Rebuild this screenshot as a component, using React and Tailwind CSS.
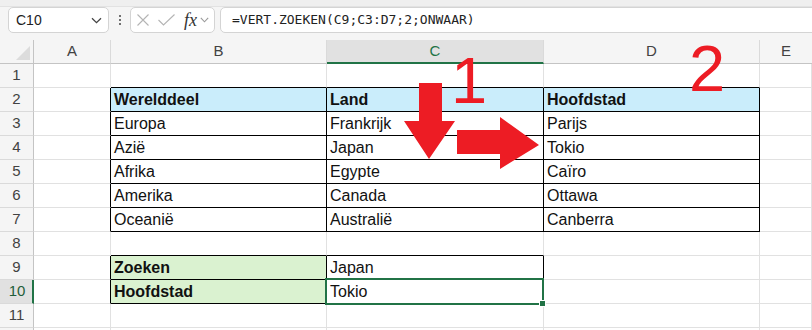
import React from "react";

const SANS = { fontFamily: '"Liberation Sans", Arial, sans-serif' };

const data = {
  2: ["Werelddeel", "Land", "Hoofdstad"],
  3: ["Europa", "Frankrijk", "Parijs"],
  4: ["Azië", "Japan", "Tokio"],
  5: ["Afrika", "Egypte", "Caïro"],
  6: ["Amerika", "Canada", "Ottawa"],
  7: ["Oceanië", "Australië", "Canberra"],
  9: ["Zoeken", "Japan", ""],
  10: ["Hoofdstad", "Tokio", ""],
};

function rightBlack(r, c) {
  if (r >= 2 && r <= 7 && c >= 0 && c <= 3) return true;
  if (r >= 9 && r <= 10 && c >= 0 && c <= 2) return true;
  return false;
}
function bottomBlack(r, c) {
  if (r >= 1 && r <= 7 && c >= 1 && c <= 3) return true;
  if (r >= 8 && r <= 10 && c >= 1 && c <= 2) return true;
  return false;
}

function Cell({ r, c }) {
  const text = data[r] && c >= 1 && c <= 3 ? data[r][c - 1] : "";
  const blue = r === 2 && c >= 1 && c <= 3;
  const green = (r === 9 || r === 10) && c === 1;
  const bold = blue || green;
  return (
    <div
      className={
        "h-[24px] border-r border-b pl-[3px] text-[16px] leading-[24px] whitespace-nowrap text-[#111] " +
        (rightBlack(r, c) ? "border-r-black " : "border-r-[#e1e1e1] ") +
        (bottomBlack(r, c) ? "border-b-black " : "border-b-[#e1e1e1] ") +
        (blue ? "bg-[#caedfb] " : green ? "bg-[#daf2d0] " : "bg-white ") +
        (bold ? "font-bold" : "font-normal")
      }
      style={SANS}
    >
      {text}
    </div>
  );
}

function RowHeader({ r }) {
  const sel = r === 10;
  return (
    <div
      className={
        "h-[24px] border-b border-b-[#dadada] flex items-center justify-center text-[15px] " +
        (sel
          ? "bg-[#e1e1e1] border-r-2 border-r-[#217346] text-[#1e5e3a]"
          : "bg-[#f5f5f5] border-r border-r-[#c4c4c4] text-[#424242]")
      }
      style={SANS}
    >
      <span className={sel ? "pl-[2px]" : ""}>{r < 12 ? r : ""}</span>
    </div>
  );
}

function ColHeader({ label, idx }) {
  const sel = label === "C";
  return (
    <div
      className={
        "h-[24px] flex items-center justify-center text-[15px] " +
        (idx === 4 ? "" : "border-r border-r-[#dadada] ") +
        (sel
          ? "bg-[#e1e1e1] border-b-2 border-b-[#217346] text-[#217346]"
          : "bg-[#f5f5f5] border-b border-b-[#c4c4c4] text-[#424242]")
      }
      style={SANS}
    >
      {label}
    </div>
  );
}

export default function App() {
  const rows = [1, 2, 3, 4, 5, 6, 7, 8, 9, 10, 11, 12];
  return (
    <div className="relative w-[812px] h-[330px] overflow-hidden bg-white">
      {/* top strip */}
      <div className="h-[7px] bg-[#efefef] border-b border-b-[#e2e2e2]" />
      {/* formula bar */}
      <div className="h-[33px] bg-[#f5f5f5] flex items-start">
        <div className="ml-[8px] w-[101px] h-[26px] bg-white border border-[#d4d4d4] rounded-[5px] flex items-center justify-between pl-[7px] pr-[6px]">
          <span className="text-[14px] text-[#222]" style={SANS}>C10</span>
          <svg width="11" height="7" viewBox="0 0 11 7">
            <path d="M1 1.2 L5.5 5.6 L10 1.2" fill="none" stroke="#444" strokeWidth="1.3" />
          </svg>
        </div>
        <div className="w-[21px] h-[26px] flex flex-col items-center justify-center gap-[2px]">
          <span className="w-[2px] h-[2px] bg-[#444] rounded-full" />
          <span className="w-[2px] h-[2px] bg-[#444] rounded-full" />
          <span className="w-[2px] h-[2px] bg-[#444] rounded-full" />
        </div>
        <div className="w-[85px] h-[26px] bg-white border border-[#d4d4d4] rounded-[5px] flex items-center pl-[6px] gap-[9px]">
          <svg width="12" height="12" viewBox="0 0 12 12">
            <path d="M0.5 0.5 L11.5 11.5 M11.5 0.5 L0.5 11.5" fill="none" stroke="#b4b4b4" strokeWidth="1.1" />
          </svg>
          <svg width="17" height="12" viewBox="0 0 17 12">
            <path d="M0.5 6 L5.5 11 L16.5 0.5" fill="none" stroke="#b4b4b4" strokeWidth="1.1" />
          </svg>
          <div className="flex items-center gap-[3px]">
            <span
              className="italic text-[18px] leading-none text-[#333] font-normal"
              style={{ fontFamily: '"Liberation Serif", "Times New Roman", serif' }}
            >
              fx
            </span>
            <svg width="9" height="6" viewBox="0 0 9 6">
              <path d="M0.8 0.8 L4.5 4.8 L8.2 0.8" fill="none" stroke="#9a9a9a" strokeWidth="1.1" />
            </svg>
          </div>
        </div>
        <div className="ml-[5px] -mr-[6px] flex-1 h-[26px] bg-white border border-[#d4d4d4] rounded-[5px] flex items-center pl-[11px]">
          <span
            className="text-[13px] text-[#222] whitespace-nowrap"
            style={{ fontFamily: '"DejaVu Sans Mono", "Liberation Mono", monospace' }}
          >
            =VERT.ZOEKEN(C9;C3:D7;2;ONWAAR)
          </span>
        </div>
      </div>

      {/* sheet */}
      <div className="grid grid-cols-[34px_77px_216px_217px_216px_1fr]">
        <div className="h-[24px] bg-[#f5f5f5] border-r border-r-[#c4c4c4] border-b border-b-[#c4c4c4] flex items-end justify-end p-[3px]">
          <svg width="14" height="14" viewBox="0 0 14 14">
            <polygon points="14,0 14,14 0,14" fill="#dcdcdc" />
          </svg>
        </div>
        {["A", "B", "C", "D", "E"].map((l, i) => (
          <ColHeader key={l} label={l} idx={i} />
        ))}
        {rows.map((r) => (
          <React.Fragment key={r}>
            <RowHeader r={r} />
            {[0, 1, 2, 3, 4].map((c) => (
              <Cell key={c} r={r} c={c} />
            ))}
          </React.Fragment>
        ))}
      </div>

      {/* selection of C10 */}
      <div className="absolute left-[325px] top-[278px] w-[219px] h-[27px] border-2 border-[#217346] pointer-events-none" />
      <div className="absolute left-[539px] top-[300px] w-[7px] h-[7px] bg-[#217346] border border-white pointer-events-none" />

      {/* annotations */}
      <svg className="absolute left-0 top-0 pointer-events-none" width="812" height="330">
        <polygon points="419,83 442,83 442,121 455,121 429,159 404,121 419,121" fill="#ed1c24" />
        <polygon points="457,130 500,130 500,117 539,145 500,169 500,154 457,154" fill="#ed1c24" />
      </svg>
      <span
        className="absolute left-[451px] top-[48px] text-[65px] leading-none text-[#ed1c24] pointer-events-none"
        style={SANS}
      >
        1
      </span>
      <span
        className="absolute left-[689px] top-[36px] text-[65px] leading-none text-[#ed1c24] pointer-events-none"
        style={SANS}
      >
        2
      </span>
    </div>
  );
}
